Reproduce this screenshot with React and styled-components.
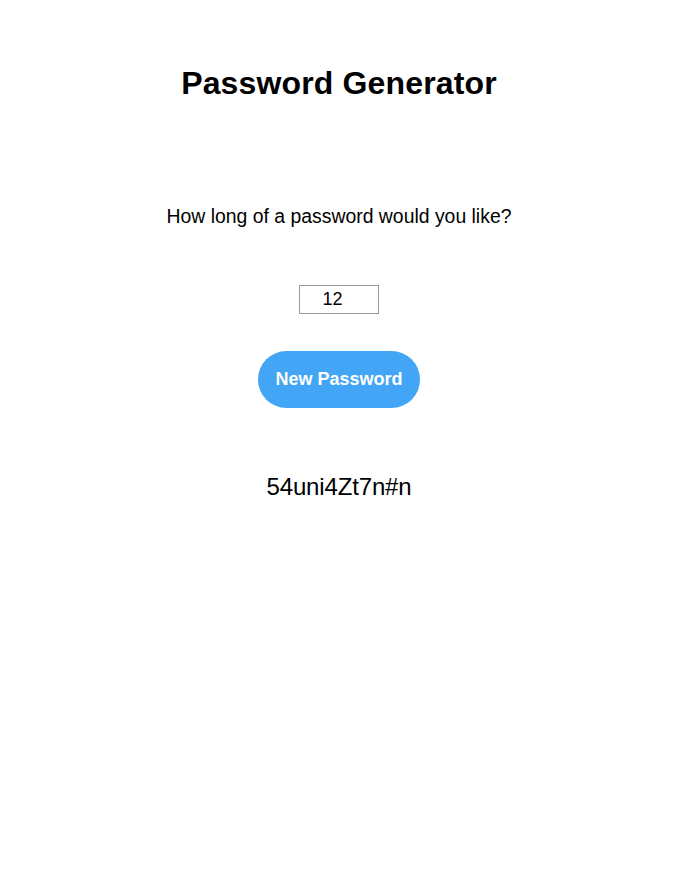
import React, { useState } from 'react'
import styled, { createGlobalStyle } from 'styled-components';

const GlobalStyle = createGlobalStyle`
  html, body {
    margin: 0;
    padding: 0;
    background: #ffffff;
    font-family: "Liberation Sans", Arial, sans-serif;
    color: #000000;
  }
`

const App = () => {
  const [length, setLength] = useState(12);
  const [password] = useState('54uni4Zt7n#n');

  return (
    <Page>
      <GlobalStyle />
      <Title>Password Generator</Title>
      <Question>How long of a password would you like?</Question>
      <LengthInput
        type='text'
        value={length}
        onChange={(e) => setLength(e.target.value)}
      />
      <GenerateButton>New Password</GenerateButton>
      <Result>{password}</Result>
    </Page>
  )
}

export default App;

const Page = styled.div`
  display: flex;
  flex-direction: column;
  align-items: center;
  width: 100%;
  min-height: 893px;
  padding-top: 65px;
  box-sizing: border-box;
`

const Title = styled.h1`
  margin: 0;
  font-size: 32px;
  font-weight: 700;
  line-height: 37px;
  letter-spacing: 0.15px;
`

const Question = styled.p`
  margin: 102px 0 0;
  font-size: 19.4px;
  line-height: 24px;
`

const LengthInput = styled.input`
  margin-top: 57px;
  width: 80px;
  height: 29px;
  box-sizing: border-box;
  border: 1px solid #999999;
  padding: 0 13px 0 0;
  text-align: center;
  font-family: "Liberation Sans", Arial, sans-serif;
  font-size: 18px;
  color: #000000;
  outline: none;
`

const GenerateButton = styled.button`
  margin-top: 37px;
  width: 162px;
  height: 57px;
  border: none;
  border-radius: 29px;
  background-color: #42a5f5;
  color: #ffffff;
  font-family: "Liberation Sans", Arial, sans-serif;
  font-size: 18px;
  font-weight: 700;
  cursor: pointer;
`

const Result = styled.div`
  margin-top: 65px;
  font-size: 24px;
  line-height: 28px;
  letter-spacing: -0.15px;
`
